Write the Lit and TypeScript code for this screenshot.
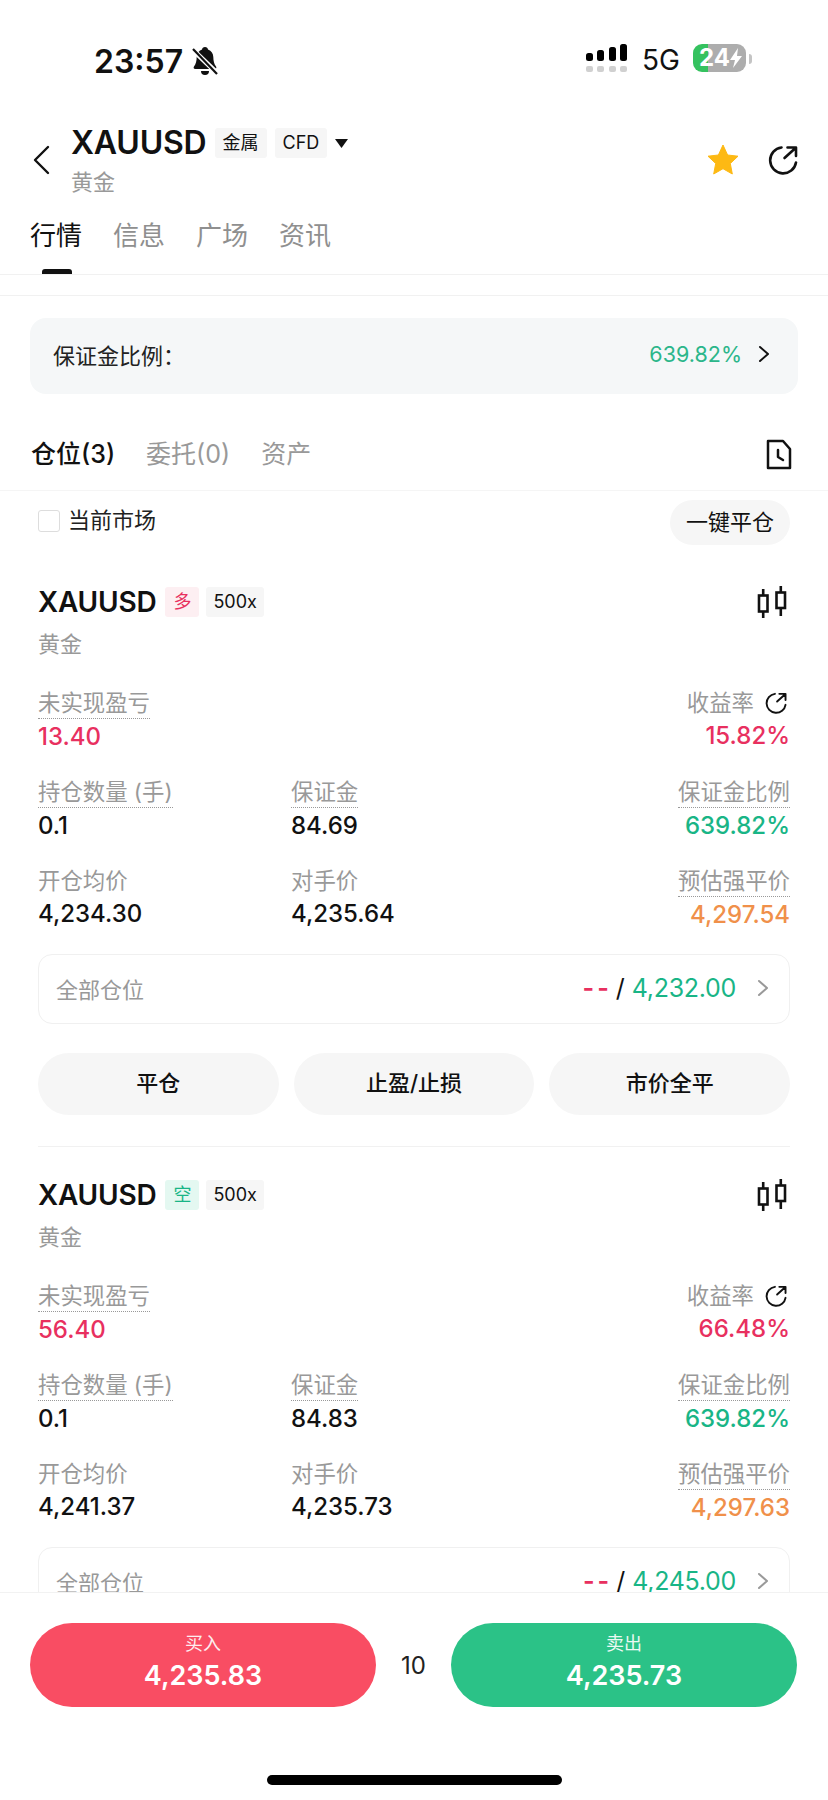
import { LitElement, html, css } from "lit";
import { customElement } from "lit/decorators.js";

const share = (size: number) => html`<svg class="ic" width=${size} height=${size} viewBox="0 0 30 30" fill="none" stroke="#111" stroke-width="2.600" stroke-linecap="round" stroke-linejoin="round"><path d="M13.500 2.500A13 13 0 1 0 28 17.500"/><path d="M16.500 13L27.500 3M19.500 2.500H28V11"/></svg>`;
const chev = (color: string, w = 12, h = 18) => html`<svg class="ic" width=${w} height=${h} viewBox="0 0 12 18" fill="none" stroke=${color} stroke-width="2" stroke-linecap="round" stroke-linejoin="round"><path d="M2 2l8 7-8 7"/></svg>`;
const candle = html`<svg class="ic" width="30" height="32" viewBox="0 0 30 32" fill="none" stroke="#111" stroke-width="2.600"><rect x="2" y="9.500" width="8.500" height="16"/><path d="M6.200 3v6.500M6.200 25.500V32"/><rect x="19.500" y="6.500" width="8.500" height="15.500"/><path d="M23.800 0v6.500M23.800 22v8"/></svg>`;

interface Stat { l: string; v: string; c?: string; dot?: boolean; }
interface Pos { side: string; sideCls: string; a: Stat; b: Stat; rows: Stat[][]; target: string; }

const positions: Pos[] = [
  { side: "多", sideCls: "long",
    a: { l: "未实现盈亏", v: "13.40", c: "red", dot: true }, b: { l: "收益率", v: "15.82%", c: "red" },
    rows: [
      [{ l: "持仓数量 (手)", v: "0.1", dot: true }, { l: "保证金", v: "84.69", dot: true }, { l: "保证金比例", v: "639.82%", c: "green", dot: true }],
      [{ l: "开仓均价", v: "4,234.30" }, { l: "对手价", v: "4,235.64" }, { l: "预估强平价", v: "4,297.54", c: "orange", dot: true }],
    ], target: "4,232.00" },
  { side: "空", sideCls: "short",
    a: { l: "未实现盈亏", v: "56.40", c: "red", dot: true }, b: { l: "收益率", v: "66.48%", c: "red" },
    rows: [
      [{ l: "持仓数量 (手)", v: "0.1", dot: true }, { l: "保证金", v: "84.83", dot: true }, { l: "保证金比例", v: "639.82%", c: "green", dot: true }],
      [{ l: "开仓均价", v: "4,241.37" }, { l: "对手价", v: "4,235.73" }, { l: "预估强平价", v: "4,297.63", c: "orange", dot: true }],
    ], target: "4,245.00" },
];

@customElement("app-root")
export class AppRoot extends LitElement {
  static styles = css`
    :host { display: block; width: 828px; height: 1800px; background: #fff; color: #111;
      font-family: Inter, "Noto Sans CJK SC", sans-serif; overflow: hidden; }
    .page { height: 1800px; display: flex; flex-direction: column; }
    .ic { display: block; flex: none; }
    .status { height: 78px; padding: 45px 0 0 94px; box-sizing: border-box; flex: none; display: flex; }
    .time { font-size: 32px; font-weight: 600; line-height: 34px; }
    .bell { margin: 1px 0 0 8px; }
    .sig { margin-left: auto; display: flex; align-items: flex-start; margin-top: -1px; }
    .bars { display: grid; grid-template-columns: repeat(4, 7px); column-gap: 4.300px; row-gap: 5px; }
    .bars i { display: block; background: #000; border-radius: 2.500px; align-self: end; }
    .bars b { display: block; height: 6px; background: #d0d0d0; border-radius: 2px; }
    .fiveg { font-size: 28px; line-height: 30px; font-weight: 400; margin: 1px 13px 0 15px; }
    .batt { width: 53px; height: 28px; border-radius: 9px; background: linear-gradient(90deg, #35c25f 0 15px, #adadad 15px);
      color: #fff; font-size: 24px; font-weight: 700; line-height: 28px; padding-left: 6px; box-sizing: border-box; display: flex; align-items: center; margin-right: 3px; }
    .battcap { width: 3px; height: 10px; background: #c4c4c4; border-radius: 0 3px 3px 0; margin: 10px 76px 0 0; }

    .head { height: 108px; flex: none; padding: 30px 30px 0 33px; box-sizing: border-box; display: flex; align-items: flex-start; }
    .back { margin: 37px 21px 0 0; }
    .title { display: flex; align-items: center; height: 34px; margin-top: 18px; }
    .sym { font-size: 32px; font-weight: 600; line-height: 34px; letter-spacing: -0.200px; }
    .tag { background: #f6f6f6; border-radius: 3px; height: 30px; padding: 0 8px; font-size: 18px; line-height: 30px; margin-left: 8px; }
    .tri { margin-left: 8px; }
    .sub { font-size: 22px; color: #999; line-height: 30px; margin-top: 7px; }
    .htools { margin-left: auto; display: flex; align-items: center; gap: 29px; margin-top: 36px; }
    .tabs { display: flex; gap: 31px; padding-left: 30px; flex: none; height: 88px; position: relative; }
    .tabs span { font-size: 26px; line-height: 36px; color: #8f8f8f; margin-top: 32px; }
    .tabs span.on { color: #111; }
    .under { position: absolute; left: 42px; bottom: 0; width: 30px; height: 5px; background: #111; border-radius: 3px 3px 0 0; }

    .scroll { flex: 1; min-height: 0; overflow: hidden; border-top: 1px solid #f1f1f1; }
    .peek { height: 20px; overflow: hidden; border-bottom: 1px solid #f1f1f1; display: grid; grid-template-columns: 427px 1fr auto; font-size: 21px; padding: 0 15px 0 32px; line-height: 30px; }
    .peek span { margin-top: -25px; }
    .ratio { margin: 22px 30px 0; height: 76px; border-radius: 16px; background: #f5f7f8; display: flex; align-items: center; padding: 0 28px 4px 23px; box-sizing: border-box; font-size: 22px; color: #222; }
    .ratio em { font-style: normal; margin-left: auto; margin-right: 16px; color: #2bb68a; font-size: 21.500px; }
    .ptabs { display: flex; gap: 31px; padding: 0 36px 0 31px; height: 97px; align-items: flex-start; border-bottom: 1px solid #f5f5f5; box-sizing: border-box; }
    .ptabs span { font-size: 25px; line-height: 34px; color: #999; margin-top: 43px; font-weight: 400; }
    .ptabs span.on { color: #111; font-weight: 500; }
    .ptabs svg { margin: 45px 0 0 auto; }
    .filter { display: flex; align-items: flex-start; padding: 9px 38px 0; height: 45px; font-size: 22px; color: #222; }
    .box { width: 22px; height: 22px; border: 1.500px solid #ddd; border-radius: 3px; margin: 10px 8px 0 0; box-sizing: border-box; }
    .ftext { line-height: 40px; }
    .pill { margin-left: auto; height: 45px; width: 120px; border-radius: 23px; background: #f6f6f6; text-align: center; line-height: 44px; color: #111; }

    .pos { margin: 0 38px; padding-top: 40px; border-top: 1px solid transparent; }
    .pos + .pos { border-top: 1px solid #f1f1f1; padding-top: 32px; }
    .ptitle { display: flex; align-items: center; height: 32px; }
    .psym { font-size: 28px; font-weight: 600; line-height: 32px; letter-spacing: -0.200px; }
    .side { width: 34px; height: 30px; border-radius: 3px; text-align: center; font-size: 18px; line-height: 30px; margin-left: 9px; }
    .long { background: #fdeff2; color: #e8305f; }
    .short { background: #e4f8f1; color: #19b586; }
    .lev { height: 30px; padding: 0 7px; background: #f6f6f6; border-radius: 3px; font-size: 18px; line-height: 30px; margin-left: 7px; }
    .ptitle svg { margin-left: auto; margin-right: 3px; }
    .psub { font-size: 22px; color: #999; line-height: 30px; margin-top: 11px; }

    .grid { display: grid; grid-template-columns: 253px 1fr auto; margin-top: 29px; row-gap: 25px; }
    .cell { display: flex; flex-direction: column; align-items: flex-start; }
    .cell.r { align-items: flex-end; grid-column: 3; }
    .lab { font-size: 22.400px; line-height: 30px; color: #999; height: 30px; display: flex; align-items: center; gap: 11px; }
    .lab svg { margin-right: 3px; }
    .dot { border-bottom: 1.500px dotted #999; height: 31px; box-sizing: border-box; }
    .val { font-size: 24px; line-height: 32px; font-weight: 500; margin-top: 2px; height: 31px; }
    .red { color: #e8305f; }
    .green { color: #19b586; }
    .orange { color: #f0904a; }
    .all { margin-top: 24px; height: 70px; box-sizing: border-box; border: 1.500px solid #f0f0f0; border-radius: 14px; display: flex; align-items: center; padding: 0 20px 3px 17px; font-size: 22px; color: #999; }
    .all .right { margin-left: auto; font-size: 25px; line-height: 30px; display: flex; align-items: center; color: #111; }
    .all .dash { color: #e8305f; font-weight: 600; letter-spacing: 3px; margin-right: 4px; }
    .all .sl { margin-right: 7px; }
    .all .green { letter-spacing: -0.300px; }
    .all .right svg { margin-left: 21px; }
    .acts { display: grid; grid-template-columns: repeat(3, 1fr); gap: 15px; margin-top: 29px; padding-bottom: 31px; }
    .acts div { height: 62px; border-radius: 31px; background: #f6f6f6; text-align: center; line-height: 60px; font-size: 22px; font-weight: 500; color: #111; }

    .trade { flex: none; height: 208px; box-sizing: border-box; border-top: 1px solid #f2f2f2; background: #fff; position: relative; }
    .btns { display: flex; padding: 30px 31px 0 30px; align-items: center; }
    .btn { width: 346px; height: 84px; border-radius: 42px; color: #fff; display: flex; flex-direction: column; align-items: center; }
    .btn small { font-size: 18px; line-height: 22px; margin-top: 10px; opacity: .9; }
    .btn strong { font-size: 27px; line-height: 34px; font-weight: 600; margin-top: 4px; }
    .buy { background: #f94d63; }
    .sell { background: #2bc287; }
    .spread { flex: 1; text-align: center; font-size: 24px; color: #222; }
    .home { position: absolute; left: 267px; bottom: 15px; width: 295px; height: 10px; background: #000; border-radius: 5px; }
  `;

  private stat(s: Stat, right = false) {
    return html`<div class="cell ${right ? "r" : ""}">
      <div class="lab ${s.dot ? "dot" : ""}">${s.l}${s.l === "收益率" ? share(22) : ""}</div>
      <div class="val ${s.c ?? ""}">${s.v}</div>
    </div>`;
  }

  render() {
    return html`<div class="page">
      <div class="status">
        <span class="time">23:57</span>
        <svg class="bell" width="28" height="30" viewBox="0 0 28 30"><path d="M14 1c1.800 0 2.800 1.200 3 2.500 3.500 1.200 5.200 4 5.300 7.500.1 4 .7 7 2.700 9.500.8 1 .2 2.500-1.200 2.500H4.200C2.800 23 2.200 21.500 3 20.500c2-2.500 2.600-5.500 2.700-9.500.1-3.500 1.800-6.300 5.300-7.500.2-1.300 1.200-2.500 3-2.500z" fill="#111"/><path d="M10 25h8a4 4 0 0 1-8 0z" fill="#111"/><path d="M1 3l26 25" stroke="#fff" stroke-width="5"/><path d="M2 3l24 25" stroke="#111" stroke-width="2.200"/></svg>
        <div class="sig">
          <div class="bars">
            <i style="height:8px"></i><i style="height:11px"></i><i style="height:14px"></i><i style="height:17px"></i>
            <b></b><b></b><b></b><b></b>
          </div>
          <span class="fiveg">5G</span>
          <div class="batt"><span>24</span><svg width="14" height="22" viewBox="0 0 14 22" style="margin-left:-1px"><path d="M9 1L1 13h5l-2 8 9-12H8z" fill="#fff"/></svg></div>
          <div class="battcap"></div>
        </div>
      </div>
      <div class="head">
        <svg class="back" width="17" height="30" viewBox="0 0 17 30" fill="none" stroke="#111" stroke-width="2.400" stroke-linecap="round" stroke-linejoin="round"><path d="M15 2L2 15l13 13"/></svg>
        <div>
          <div class="title">
            <span class="sym">XAUUSD</span><span class="tag">金属</span><span class="tag">CFD</span>
            <svg class="tri" width="13" height="9" viewBox="0 0 13 9"><path d="M0 0h13L6.500 9z" fill="#111"/></svg>
          </div>
          <div class="sub">黄金</div>
        </div>
        <div class="htools">
          <svg class="ic" width="32" height="32" viewBox="0 0 32 32"><path d="M16 1l4.600 10 10.400 1.200-7.700 7.300 2 10.500L16 24.700 6.700 30l2-10.500L1 12.200 11.400 11z" fill="#fdb913" stroke="#fdb913" stroke-linejoin="round"/></svg>
          ${share(30)}
        </div>
      </div>
      <div class="tabs">
        <span class="on">行情</span><span>信息</span><span>广场</span><span>资讯</span>
        <div class="under"></div>
      </div>
      <div class="scroll">
        <div class="peek"><span>开仓价</span><span>预估强平</span><span>对手价格</span></div>
        <div class="ratio">保证金比例：<em>639.82%</em>${chev("#111")}</div>
        <div class="ptabs">
          <span class="on">仓位(3)</span><span>委托(0)</span><span>资产</span>
          <svg width="26" height="31" viewBox="0 0 26 31" fill="none" stroke="#111" stroke-width="2.500" stroke-linejoin="round"><path d="M2 2h15l7 8v19H2z"/><path d="M12 11v7l5 3" stroke-linecap="round"/></svg>
        </div>
        <div class="filter"><span class="box"></span><span class="ftext">当前市场</span><span class="pill">一键平仓</span></div>
        ${positions.map((p) => html`<div class="pos">
          <div class="ptitle"><span class="psym">XAUUSD</span><span class="side ${p.sideCls}">${p.side}</span><span class="lev">500x</span>${candle}</div>
          <div class="psub">黄金</div>
          <div class="grid">
            ${this.stat(p.a)}<div></div>${this.stat(p.b, true)}
            ${p.rows.map((r) => html`${this.stat(r[0])}${this.stat(r[1])}${this.stat(r[2], true)}`)}
          </div>
          <div class="all">全部仓位<div class="right"><span class="dash">--</span><span class="sl">/</span><span class="green">${p.target}</span>${chev("#999")}</div></div>
          <div class="acts"><div>平仓</div><div>止盈/止损</div><div>市价全平</div></div>
        </div>`)}
      </div>
      <div class="trade">
        <div class="btns">
          <div class="btn buy"><small>买入</small><strong>4,235.83</strong></div>
          <div class="spread">10</div>
          <div class="btn sell"><small>卖出</small><strong>4,235.73</strong></div>
        </div>
        <div class="home"></div>
      </div>
    </div>`;
  }
}
